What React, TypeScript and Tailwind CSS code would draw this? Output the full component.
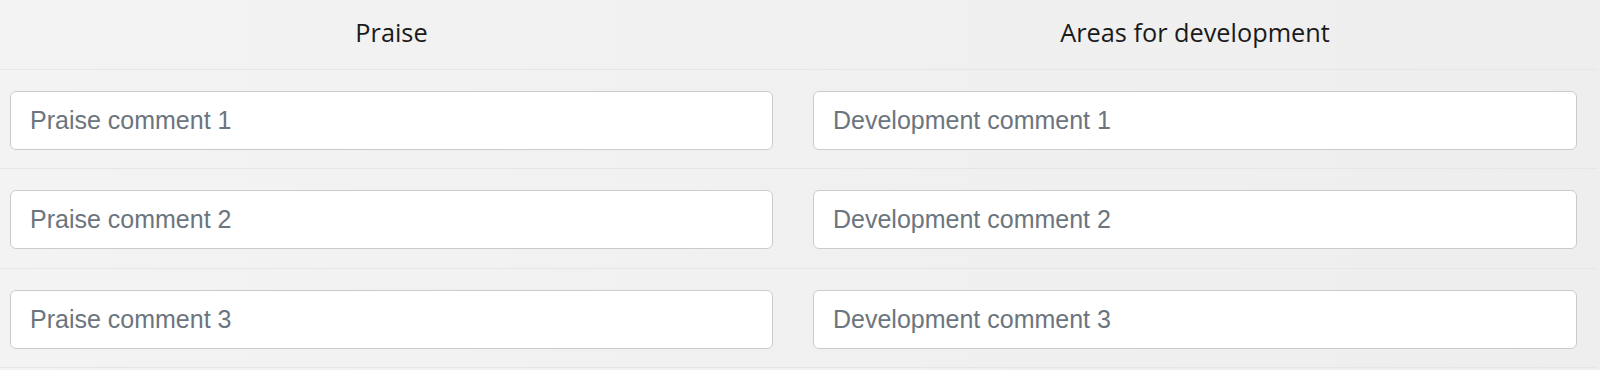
import React from "react";

const rows = [1, 2, 3];

export default function App() {
  return (
    <div className="w-[1600px] h-[370px] bg-gradient-to-r from-[#f3f3f3] to-[#eeeeee] overflow-hidden">
      <div className="w-[1597px]">
        <div className="h-[70px] border-b border-[#e6e6e6] pl-[10px] grid grid-cols-[763px_764px] gap-x-[40px] pt-[14px] text-[25.3px] leading-[37.5px] text-[#1a1a1a]" style={{ fontFamily: '"Open Sans", sans-serif' }}>
          <div className="text-center">Praise</div>
          <div className="text-center">Areas for development</div>
        </div>
        {rows.map((n) => (
          <div
            key={n}
            className={`${n === 2 ? "h-[100px]" : "h-[99px]"} border-b border-[#e6e6e6] pl-[10px] pt-[21px] grid grid-cols-[763px_764px] gap-x-[40px] items-start`}
          >
            <input
              placeholder={`Praise comment ${n}`}
              className="h-[59px] w-full bg-white border border-[#c9cccf] rounded-[6px] pl-[19px] text-[25px] text-[#495057] placeholder:text-[#6c757d] outline-none"
              style={{ fontFamily: '"Liberation Sans", Arial, sans-serif' }}
            />
            <input
              placeholder={`Development comment ${n}`}
              className="h-[59px] w-full bg-white border border-[#c9cccf] rounded-[6px] pl-[19px] text-[25px] text-[#495057] placeholder:text-[#6c757d] outline-none"
              style={{ fontFamily: '"Liberation Sans", Arial, sans-serif' }}
            />
          </div>
        ))}
      </div>
    </div>
  );
}
